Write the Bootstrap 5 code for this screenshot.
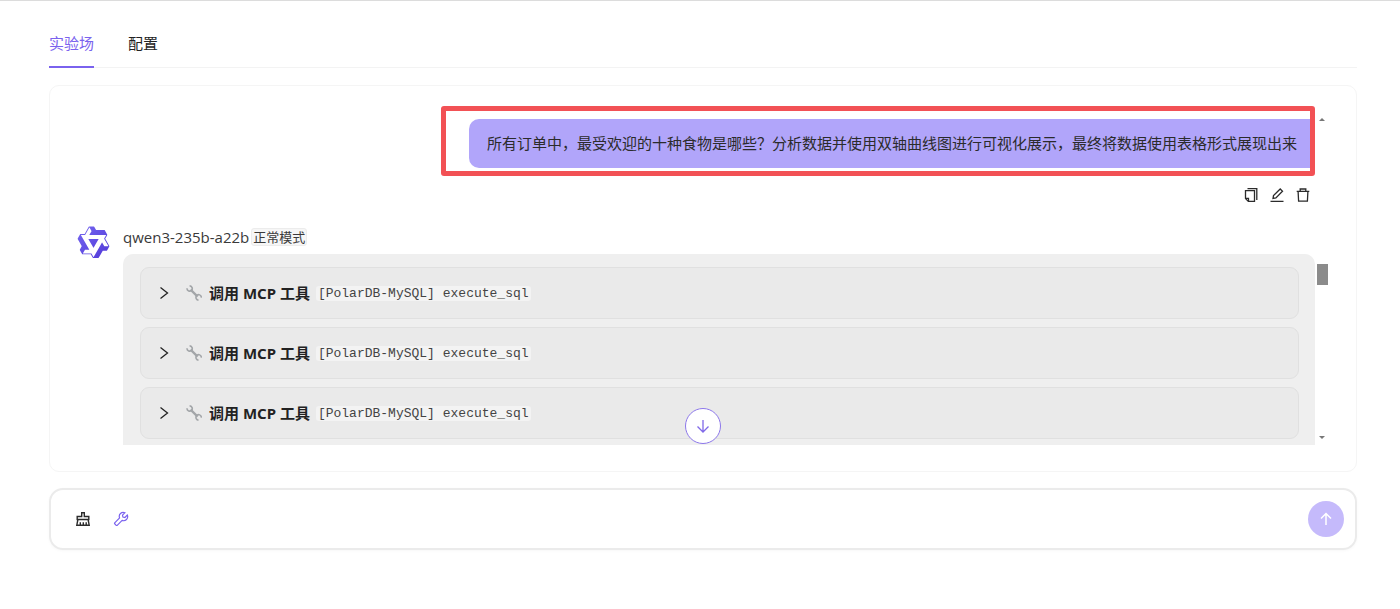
<!DOCTYPE html>
<html lang="zh-CN">
<head>
<meta charset="utf-8">
<meta name="viewport" content="width=device-width, initial-scale=1">
<title>实验场</title>
<link href="https://cdn.jsdelivr.net/npm/bootstrap@5.3.0/dist/css/bootstrap.min.css" rel="stylesheet">
<style>
  :root { --accent: #7a62ee; --ink: #2b2b2b; }
  body { font-family: "Noto Sans", "Noto Sans CJK SC", sans-serif; font-size: 15px; line-height: 24px; color: var(--ink); background: #fff; border-top: 1px solid #dcdcdc; }
  .page { padding: 16px 43px 56px 49px; }
  svg { display: block; fill: none; stroke: currentColor; }
  .tabs { border-bottom: 1px solid #f3f3f3; gap: 34px; }
  .tabs .nav-link { padding: 14px 0 11px; line-height: 24px; color: #222; border-bottom: 2px solid transparent; margin-bottom: -1px; }
  .tabs .nav-link.active { color: var(--accent); border-bottom-color: var(--accent); }
  .chat { border: 1px solid #f5f5f5; border-radius: 10px; margin-top: 17px; padding: 25px 27px 26px 27px; }
  .bubble { background: #b1a5fa; border-radius: 10px 0 0 10px; padding: 12px 18px; line-height: 25px; margin-top: 8px; }
  .frame { position: absolute; inset: -5px 0 -8px -28px; border: 5px solid #f25155; border-radius: 3px; pointer-events: none; }
  .tool-btn { border: 0; background: none; padding: 0; color: var(--ink); }
  .tool-btn.active { color: var(--accent); }
  .actions { gap: 10px; margin: 19px 4px 0 0; }
  .reply { gap: 12px; margin: 22px 0 0 -1px; }
  .model { font-family: "Open Sans", "Noto Sans CJK SC", sans-serif; line-height: 24px; gap: 2px; color: #3a3a3a; }
  .mode { font-size: 13px; line-height: 16px; background: #f6f6f6; border: 1px solid #ececec; border-radius: 3px; padding: 0 1px; }
  .calls { background: #efefef; border-radius: 10px 10px 0 0; padding: 13px 16px 6px 17px; gap: 8px; margin-top: 5px; }
  .call { width: 100%; height: 52px; border: 1px solid #e0e0e0; border-radius: 9px; background: #eaeaea; padding: 0 15px; text-align: left; color: #222; }
  .call .spanner { margin: 0 7px 0 14px; }
  .call strong { margin-right: 6px; }
  .call code { font-family: "Liberation Mono", monospace; font-size: 13px; line-height: 15px; color: #444; background: #f3f3f3; border-radius: 3px; padding: 0 2px; }
  .track { width: 14px; }
  .track .up { margin-top: 7px; }
  .thumb { width: 11px; height: 21px; background: #8b8b8b; margin-top: 143px; }
  .track .down { margin: auto 0 6px; }
  .track svg { stroke: none; fill: #777; }
  .jump { position: absolute; left: 50%; bottom: 27px; width: 36px; height: 36px; margin-left: -18px; border: 1px solid #8d78ea; color: #8069e8; background: #fff; border-radius: 50%; }
  .composer { border: 2px solid #ebebeb; border-radius: 14px; margin-top: 16px; padding: 11px 11px 11px 24px; gap: 22px; box-shadow: 0 1px 3px #00000008; }
  .composer input { border: 0; background: none; outline: 0; }
  .send { width: 36px; height: 36px; border: 0; border-radius: 50%; background: #c5bafb; color: #fff; }
</style>
<script src="https://cdn.jsdelivr.net/npm/bootstrap@5.3.0/dist/js/bootstrap.bundle.min.js"></script>
</head>
<body>
<svg width="0" height="0" class="position-absolute" aria-hidden="true">
  <defs>
    <symbol id="chevron" viewBox="0 0 16 16"><path d="M4.500 2.500 11.500 8l-7 5.500" stroke-width="1.300"/></symbol>
    <symbol id="spanner" viewBox="0 0 16 16">
      <path d="M4.600 4.600 11.600 11.600" stroke="#a3a6a9" stroke-width="2.200"/>
      <path d="M1 3.200a2.700 2.700 0 0 0 4.800 1.900A2.700 2.700 0 0 0 3.600.9M15.200 12.700a2.600 2.600 0 0 0-4.700-1.900 2.700 2.700 0 0 0 2 4.300" stroke="#a3a6a9" stroke-width="1.600"/>
    </symbol>
  </defs>
</svg>
<main class="page">
  <ul class="nav tabs">
    <li class="nav-item"><a class="nav-link active" aria-current="page" href="#">实验场</a></li>
    <li class="nav-item"><a class="nav-link" href="#">配置</a></li>
  </ul>

  <section class="chat position-relative">
    <div class="d-flex">
      <div class="flex-grow-1">
        <div class="d-flex justify-content-end">
          <div class="position-relative">
            <div class="bubble">所有订单中，最受欢迎的十种食物是哪些？分析数据并使用双轴曲线图进行可视化展示，最终将数据使用表格形式展现出来</div>
            <div class="frame"></div>
          </div>
        </div>
        <div class="actions d-flex justify-content-end">
          <button class="tool-btn" type="button" aria-label="复制"><svg width="16" height="16" viewBox="0 0 16 16" stroke-width="1.300"><path d="M4.500 1.600H13.800V13M2.500 3.700H11.500V14.400H5.300L2.500 11.600ZM2.500 11.300H5.500V14.300"/></svg></button>
          <button class="tool-btn" type="button" aria-label="编辑"><svg width="16" height="16" viewBox="0 0 16 16" stroke-width="1.300"><path d="M1.500 14.300h13M4 11.500l.5-2.900L11.200 2l2.300 2.300-6.600 6.700Z"/></svg></button>
          <button class="tool-btn" type="button" aria-label="删除"><svg width="16" height="16" viewBox="0 0 16 16" stroke-width="1.300"><path d="M1.700 4.300h12.600M5.200 4V2h5.600v2M3.100 4.500l.5 9.700h8.800l.5-9.700"/></svg></button>
        </div>
        <div class="reply d-flex">
          <svg class="flex-shrink-0" width="35" height="36" viewBox="0 0 24 25" aria-label="Qwen">
            <defs><linearGradient id="qw" x1="0" y1="0" x2="1" y2="1"><stop offset="0" stop-color="#7566f0"/><stop offset="1" stop-color="#5038d8"/></linearGradient></defs>
            <path fill="url(#qw)" stroke="none" d="M12.604 1.34c.393.69.784 1.382 1.174 2.075a.18.18 0 00.157.091h5.552c.174 0 .322.11.446.327l1.454 2.57c.19.337.24.478.024.837-.26.43-.513.864-.76 1.3l-.367.658c-.106.196-.223.28-.04.512l2.652 4.637c.172.301.111.494-.043.77-.437.785-.882 1.564-1.335 2.34-.159.272-.352.375-.68.37-.777-.016-1.552-.01-2.327.016a.099.099 0 00-.081.05 575.097 575.097 0 01-2.705 4.74c-.169.293-.38.363-.725.364-.997.003-2.002.004-3.017.002a.537.537 0 01-.465-.271l-1.335-2.323a.09.09 0 00-.083-.049H4.982c-.285.03-.553-.001-.805-.092l-1.603-2.77a.543.543 0 01-.002-.54l1.207-2.12a.198.198 0 000-.197 550.951 550.951 0 01-1.875-3.272l-.79-1.395c-.16-.31-.173-.496.095-.965.465-.813.927-1.625 1.387-2.436.132-.234.304-.334.584-.335a338.3 338.3 0 012.589-.001.124.124 0 00.107-.063l2.806-4.895a.488.488 0 01.422-.246c.524-.001 1.053 0 1.583-.006L11.704 1c.341-.003.724.032.9.34zm-3.432.403a.06.06 0 00-.052.03L6.254 6.788a.157.157 0 01-.135.078H3.253c-.056 0-.07.025-.041.074l5.81 10.156c.025.042.013.062-.034.063l-2.795.015a.218.218 0 00-.2.116l-1.32 2.31c-.044.078-.021.118.068.118l5.716.008c.046 0 .08.02.104.061l1.403 2.454c.046.081.092.082.139 0l5.006-8.76.783-1.382a.055.055 0 01.096 0l1.424 2.53a.122.122 0 00.107.062l2.763-.02a.04.04 0 00.035-.02.041.041 0 000-.04l-2.9-5.086a.108.108 0 010-.113l.293-.507 1.12-1.977c.024-.041.012-.062-.035-.062H9.2c-.059 0-.073-.026-.043-.077l1.434-2.505a.107.107 0 000-.114L9.225 1.774a.06.06 0 00-.053-.031zm6.29 8.02c.046 0 .058.02.034.06l-.832 1.465-2.613 4.585a.056.056 0 01-.05.029.058.058 0 01-.05-.029L8.498 9.841c-.02-.034-.01-.052.028-.054l.216-.012 6.722-.012z"/>
          </svg>
          <div class="flex-grow-1">
            <div class="model d-flex align-items-center"><span>qwen3-235b-a22b</span><span class="mode">正常模式</span></div>
            <div class="calls d-flex flex-column">
              <button class="call d-flex align-items-center" type="button"><svg width="16" height="16"><use href="#chevron"/></svg><svg class="spanner" width="16" height="16"><use href="#spanner"/></svg><strong>调用 MCP 工具</strong><code>[PolarDB-MySQL] execute_sql</code></button>
              <button class="call d-flex align-items-center" type="button"><svg width="16" height="16"><use href="#chevron"/></svg><svg class="spanner" width="16" height="16"><use href="#spanner"/></svg><strong>调用 MCP 工具</strong><code>[PolarDB-MySQL] execute_sql</code></button>
              <button class="call d-flex align-items-center" type="button"><svg width="16" height="16"><use href="#chevron"/></svg><svg class="spanner" width="16" height="16"><use href="#spanner"/></svg><strong>调用 MCP 工具</strong><code>[PolarDB-MySQL] execute_sql</code></button>
            </div>
          </div>
        </div>
      </div>
      <div class="track d-flex flex-column align-items-center flex-shrink-0" aria-hidden="true">
        <svg class="up" width="6" height="3"><path d="M0 3 3 0l3 3z"/></svg>
        <div class="thumb"></div>
        <svg class="down" width="6" height="3"><path d="M0 0h6L3 3z"/></svg>
      </div>
    </div>
    <button class="jump d-flex align-items-center justify-content-center p-0" type="button" aria-label="滚动到底部"><svg width="16" height="16" viewBox="0 0 16 16" stroke-width="1.300"><path d="M8 2v12M2.500 8.500 8 14l5.500-5.500"/></svg></button>
  </section>

  <form class="composer d-flex align-items-center">
    <button class="tool-btn" type="button" aria-label="清空"><svg width="16" height="16" viewBox="0 0 16 16" stroke-width="1.400"><path d="M6.700 5.500V1.800h2.600v3.700h4.500v3H2.200v-3ZM2.900 8.500 1.800 14.200h12.400L13.100 8.500M5.300 14v-2.800M8.300 14v-2.800M11.200 14v-2.800"/></svg></button>
    <button class="tool-btn active" type="button" aria-label="工具"><svg width="16" height="16" viewBox="0 0 16 16" stroke-width="1.200"><path d="M11.900 1.700a4 4 0 0 0-5.300 5.200L1.700 11.800a.7.7 0 0 0 0 1l1.500 1.500a.7.7 0 0 0 1 0L9.100 9.400a4 4 0 0 0 5.200-5.300L11.900 6.500 9.900 6.100 9.500 4.100Z"/></svg></button>
    <input class="flex-grow-1" type="text" aria-label="输入消息">
    <button class="send d-flex align-items-center justify-content-center p-0" type="submit" aria-label="发送"><svg width="16" height="16" viewBox="0 0 16 16" stroke-width="1.500"><path d="M8 14V2.500M3 7.500l5-5 5 5"/></svg></button>
  </form>
</main>
</body>
</html>
